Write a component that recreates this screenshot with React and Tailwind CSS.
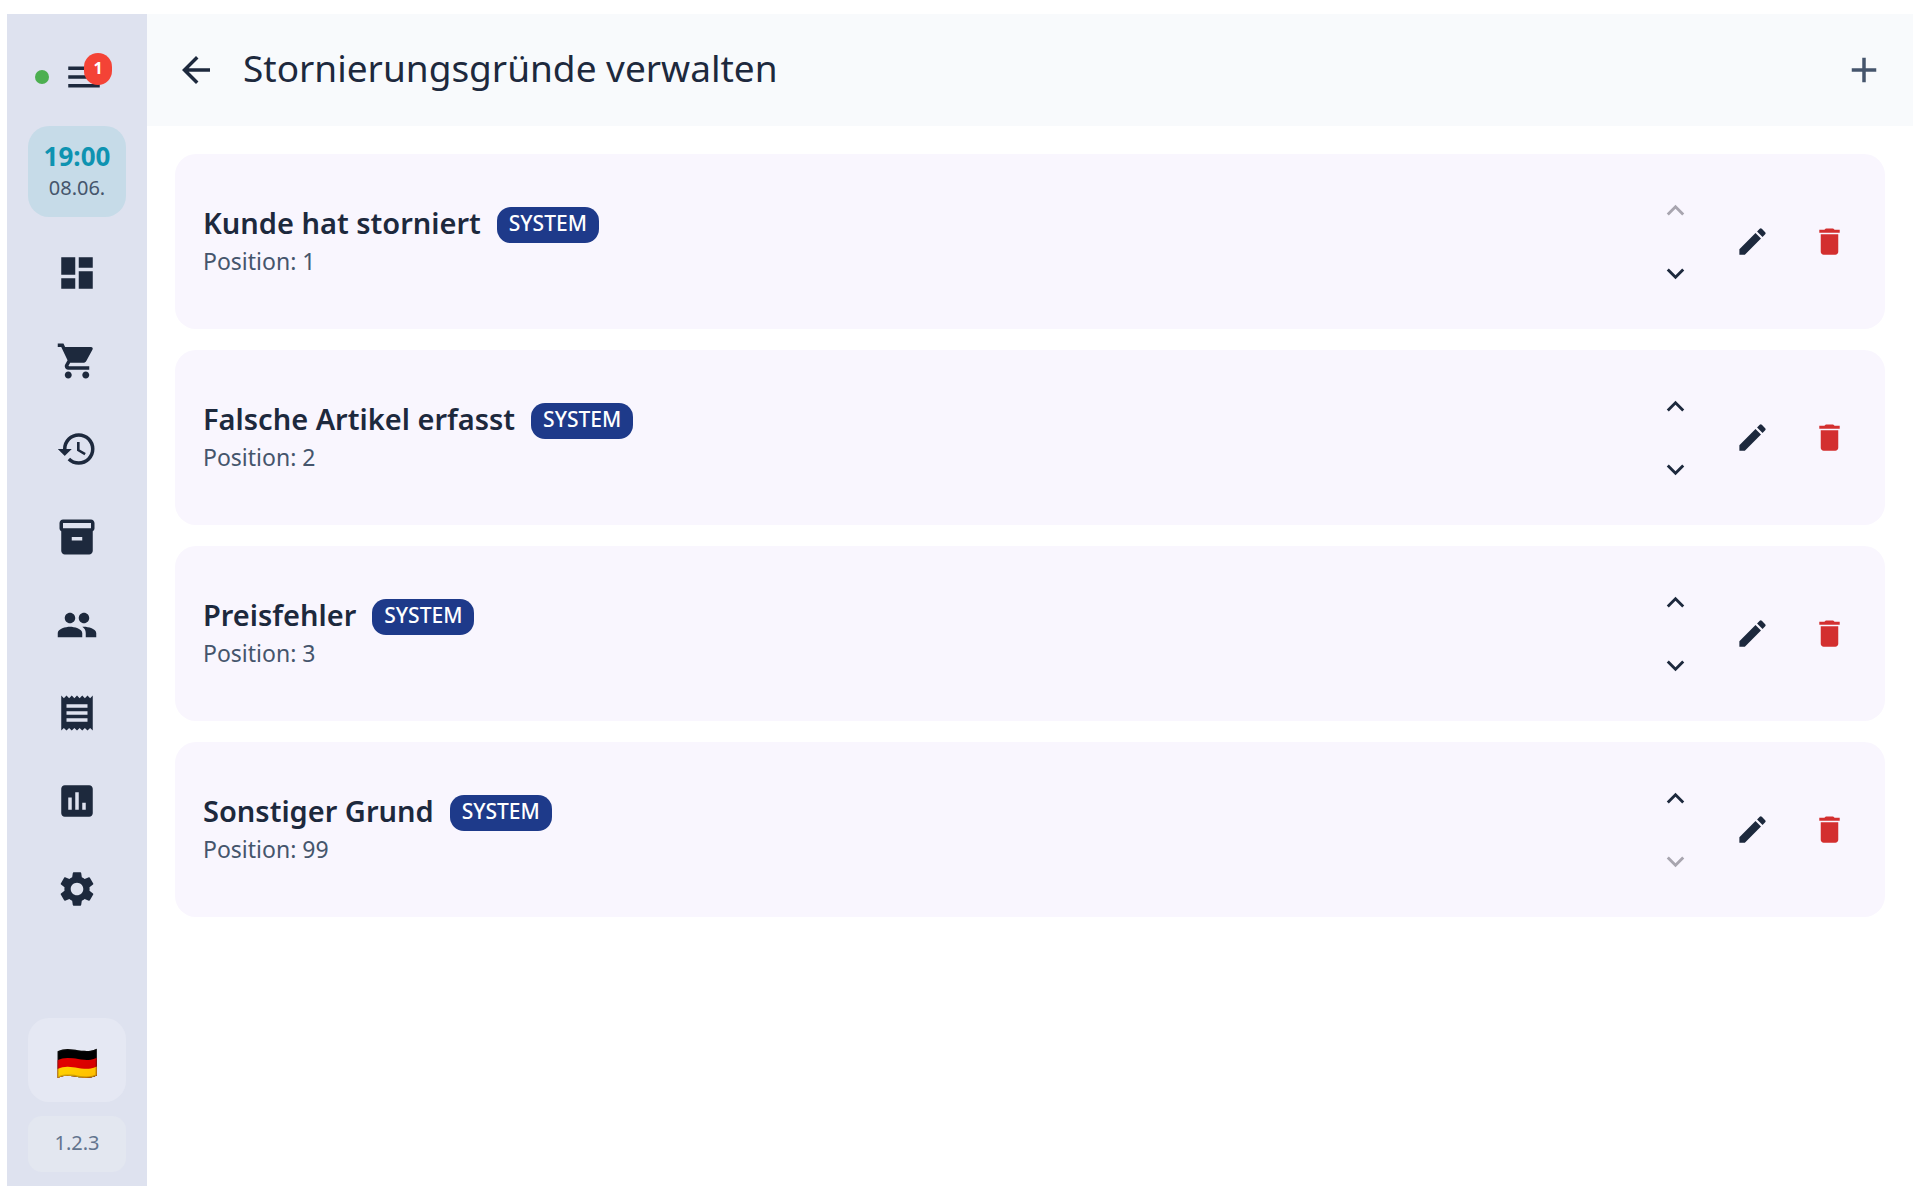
import {
  MdAdd,
  MdArrowBack,
  MdAssessment,
  MdDashboard,
  MdDelete,
  MdEdit,
  MdHistory,
  MdInventory2,
  MdKeyboardArrowDown,
  MdKeyboardArrowUp,
  MdMenu,
  MdPeople,
  MdReceipt,
  MdSettings,
  MdShoppingCart,
} from "react-icons/md";

const NAV = [
  { label: "Dashboard", Icon: MdDashboard },
  { label: "Verkauf", Icon: MdShoppingCart },
  { label: "Verlauf", Icon: MdHistory },
  { label: "Artikel", Icon: MdInventory2 },
  { label: "Kunden", Icon: MdPeople },
  { label: "Belege", Icon: MdReceipt },
  { label: "Berichte", Icon: MdAssessment },
  { label: "Einstellungen", Icon: MdSettings },
];

const REASONS = [
  { title: "Kunde hat storniert", position: 1 },
  { title: "Falsche Artikel erfasst", position: 2 },
  { title: "Preisfehler", position: 3 },
  { title: "Sonstiger Grund", position: 99 },
];

function Sidebar() {
  return (
    <aside className="flex w-[140px] shrink-0 flex-col items-stretch bg-[#dee2ef] px-[21px] pb-[14px]">
      <div className="flex h-28 items-center pt-[14px] pl-[7px]">
        <span className="size-[14px] rounded-full bg-[#4caf50]" />
        <button type="button" aria-label="Menü" className="relative ml-[14px] size-[42px]">
          <MdMenu className="size-[42px]" />
          <span className="absolute -top-[3px] left-[21px] flex h-8 w-7 items-center justify-center rounded-[14px] bg-[#f44336] pb-[2px] text-[16px] leading-none font-bold text-white">
            1
          </span>
        </button>
      </div>

      <div className="flex h-[91px] flex-col items-center rounded-[21px] bg-[#c6dbe8] pt-[14px]">
        <span className="text-[26px] leading-8 font-bold text-[#0e93b1]">19:00</span>
        <span className="text-[20px] leading-8 text-slate-600">08.06.</span>
      </div>

      <nav className="mt-3 flex flex-col">
        {NAV.map(({ label, Icon }) => (
          <a key={label} href="#" aria-label={label} className="flex h-[88px] items-center justify-center">
            <Icon className="size-[42px]" />
          </a>
        ))}
      </nav>

      <div className="mt-auto flex flex-col gap-[14px]">
        <button
          type="button"
          aria-label="Sprache"
          className="flex h-21 items-center justify-center rounded-[21px] bg-[#e5e8f3] pt-1 text-[34px] leading-none"
        >
          🇩🇪
        </button>
        <div className="flex h-14 items-center justify-center rounded-[14px] bg-[#e3e7f0] pb-[2px] text-[20px] leading-7 text-slate-500">
          1.2.3
        </div>
      </div>
    </aside>
  );
}

function ReasonCard({ title, position, first, last }) {
  return (
    <li className="flex min-h-[175px] items-center rounded-[21px] bg-[#f9f6fe] py-6 pr-[17px] pl-7">
      <div className="min-w-0 flex-1 pb-[2px]">
        <div className="flex items-center gap-4">
          <h2 className="pb-1 text-[29px] leading-8 font-semibold">{title}</h2>
          <span className="flex h-9 items-center rounded-[14px] bg-[#1e3a8a] px-3 pb-[2px] text-[21px] leading-none font-medium text-white">
            SYSTEM
          </span>
        </div>
        <p className="mt-1 text-[23px] leading-7 text-slate-600">Position: {position}</p>
      </div>
      <div className="flex w-[77px] flex-col">
        <button
          type="button"
          aria-label="Nach oben"
          disabled={first}
          className="flex h-[63px] items-center justify-center disabled:text-[#a8a5af]"
        >
          <MdKeyboardArrowUp className="size-[35px]" />
        </button>
        <button
          type="button"
          aria-label="Nach unten"
          disabled={last}
          className="flex h-[63px] items-center justify-center disabled:text-[#a8a5af]"
        >
          <MdKeyboardArrowDown className="size-[35px]" />
        </button>
      </div>
      <button type="button" aria-label="Bearbeiten" className="flex h-[78px] w-[77px] items-center justify-center">
        <MdEdit className="size-[35px]" />
      </button>
      <button
        type="button"
        aria-label="Löschen"
        className="flex h-[78px] w-[77px] items-center justify-center text-[#d32f2f]"
      >
        <MdDelete className="size-[35px]" />
      </button>
    </li>
  );
}

export default function App() {
  return (
    <div className="flex min-h-screen bg-white px-[7px] py-[14px] font-['Noto_Sans',sans-serif] text-slate-800">
      <Sidebar />
      <main className="flex min-w-0 flex-1 flex-col">
        <header className="flex h-28 items-center bg-slate-50 px-7">
          <button type="button" aria-label="Zurück" className="size-[42px]">
            <MdArrowBack className="size-[42px]" />
          </button>
          <h1 className="ml-[26px] flex-1 pb-1 text-[37px] leading-[48px]">
            Stornierungsgründe verwalten
          </h1>
          <button type="button" aria-label="Hinzufügen" className="size-[42px] text-slate-600">
            <MdAdd className="size-[42px]" />
          </button>
        </header>
        <ul className="flex flex-col gap-[21px] p-7">
          {REASONS.map((reason, i) => (
            <ReasonCard
              key={reason.title}
              title={reason.title}
              position={reason.position}
              first={i === 0}
              last={i === REASONS.length - 1}
            />
          ))}
        </ul>
      </main>
    </div>
  );
}
